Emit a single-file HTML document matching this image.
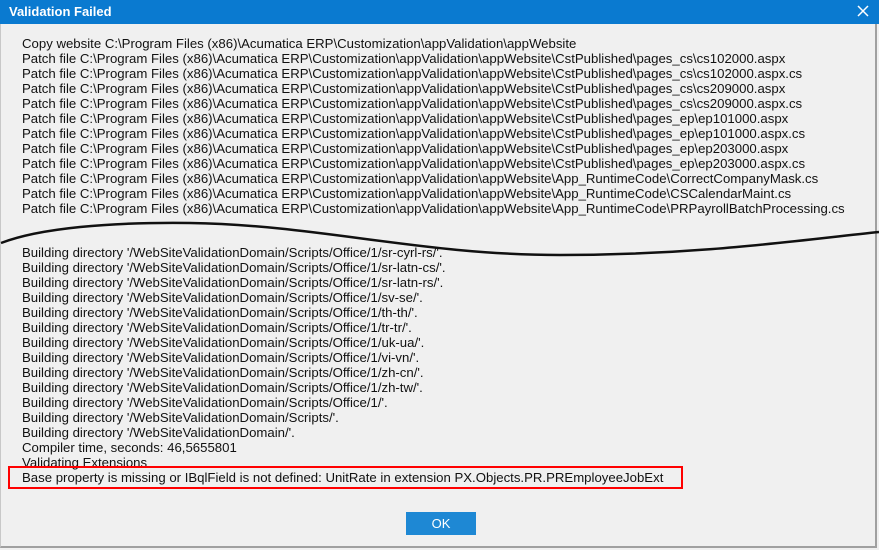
<!DOCTYPE html>
<html><head><style>
body{margin:0;width:879px;height:550px;overflow:hidden;background:#f0f0f0;font-family:"Liberation Sans",Arial,sans-serif;position:relative}
.title{position:absolute;left:0;top:0;width:879px;height:24px;background:#0a7ad0;color:#fff;font-weight:bold;font-size:13px;line-height:24px}
.title span{position:absolute;left:9px}
.x{position:absolute;right:10px;top:5px}
.frame{position:absolute;left:0;top:24px;width:877px;height:524px;border-right:2px solid #a0a0a0;border-bottom:2px solid #a0a0a0;border-left:1px solid #c8c8c8;box-sizing:border-box}
.t{position:absolute;left:22px;font-size:13.2px;line-height:15px;color:#111;white-space:pre}
.red{position:absolute;left:8px;top:466px;width:675px;height:23px;border:2px solid #f00;box-sizing:border-box}
.ok{position:absolute;left:406px;top:512px;width:70px;height:23px;background:#1e88d4;color:#fff;font-size:13px;line-height:23px;text-align:center}
</style></head><body>
<div class="title"><span>Validation Failed</span>
<svg class="x" width="12" height="12" viewBox="0 0 12 12"><path d="M1 1L11 11M11 1L1 11" stroke="#fff" stroke-width="1.5"/></svg></div>
<div class="frame"></div>
<div class="t" style="top:36px">Copy website C:\Program Files (x86)\Acumatica ERP\Customization\appValidation\appWebsite
Patch file C:\Program Files (x86)\Acumatica ERP\Customization\appValidation\appWebsite\CstPublished\pages_cs\cs102000.aspx
Patch file C:\Program Files (x86)\Acumatica ERP\Customization\appValidation\appWebsite\CstPublished\pages_cs\cs102000.aspx.cs
Patch file C:\Program Files (x86)\Acumatica ERP\Customization\appValidation\appWebsite\CstPublished\pages_cs\cs209000.aspx
Patch file C:\Program Files (x86)\Acumatica ERP\Customization\appValidation\appWebsite\CstPublished\pages_cs\cs209000.aspx.cs
Patch file C:\Program Files (x86)\Acumatica ERP\Customization\appValidation\appWebsite\CstPublished\pages_ep\ep101000.aspx
Patch file C:\Program Files (x86)\Acumatica ERP\Customization\appValidation\appWebsite\CstPublished\pages_ep\ep101000.aspx.cs
Patch file C:\Program Files (x86)\Acumatica ERP\Customization\appValidation\appWebsite\CstPublished\pages_ep\ep203000.aspx
Patch file C:\Program Files (x86)\Acumatica ERP\Customization\appValidation\appWebsite\CstPublished\pages_ep\ep203000.aspx.cs
Patch file C:\Program Files (x86)\Acumatica ERP\Customization\appValidation\appWebsite\App_RuntimeCode\CorrectCompanyMask.cs
Patch file C:\Program Files (x86)\Acumatica ERP\Customization\appValidation\appWebsite\App_RuntimeCode\CSCalendarMaint.cs</div>
<div class="t" style="top:201px">Patch file C:\Program Files (x86)\Acumatica ERP\Customization\appValidation\appWebsite\App_RuntimeCode\PRPayrollBatchProcessing.cs</div>
<svg style="position:absolute;left:0;top:0" width="879" height="550"><path d="M1 243 C 40 228, 110 222, 190 223 C 320 225, 420 255, 560 255 C 700 255, 800 240, 879 232" fill="none" stroke="#111" stroke-width="2.5"/></svg>
<div class="t" style="top:245px">Building directory '/WebSiteValidationDomain/Scripts/Office/1/sr-cyrl-rs/'.
Building directory '/WebSiteValidationDomain/Scripts/Office/1/sr-latn-cs/'.
Building directory '/WebSiteValidationDomain/Scripts/Office/1/sr-latn-rs/'.
Building directory '/WebSiteValidationDomain/Scripts/Office/1/sv-se/'.
Building directory '/WebSiteValidationDomain/Scripts/Office/1/th-th/'.
Building directory '/WebSiteValidationDomain/Scripts/Office/1/tr-tr/'.
Building directory '/WebSiteValidationDomain/Scripts/Office/1/uk-ua/'.
Building directory '/WebSiteValidationDomain/Scripts/Office/1/vi-vn/'.
Building directory '/WebSiteValidationDomain/Scripts/Office/1/zh-cn/'.
Building directory '/WebSiteValidationDomain/Scripts/Office/1/zh-tw/'.
Building directory '/WebSiteValidationDomain/Scripts/Office/1/'.
Building directory '/WebSiteValidationDomain/Scripts/'.
Building directory '/WebSiteValidationDomain/'.
Compiler time, seconds: 46,5655801
Validating Extensions
Base property is missing or IBqlField is not defined: UnitRate in extension PX.Objects.PR.PREmployeeJobExt</div>
<div class="red"></div>
<div class="ok">OK</div>
</body></html>
